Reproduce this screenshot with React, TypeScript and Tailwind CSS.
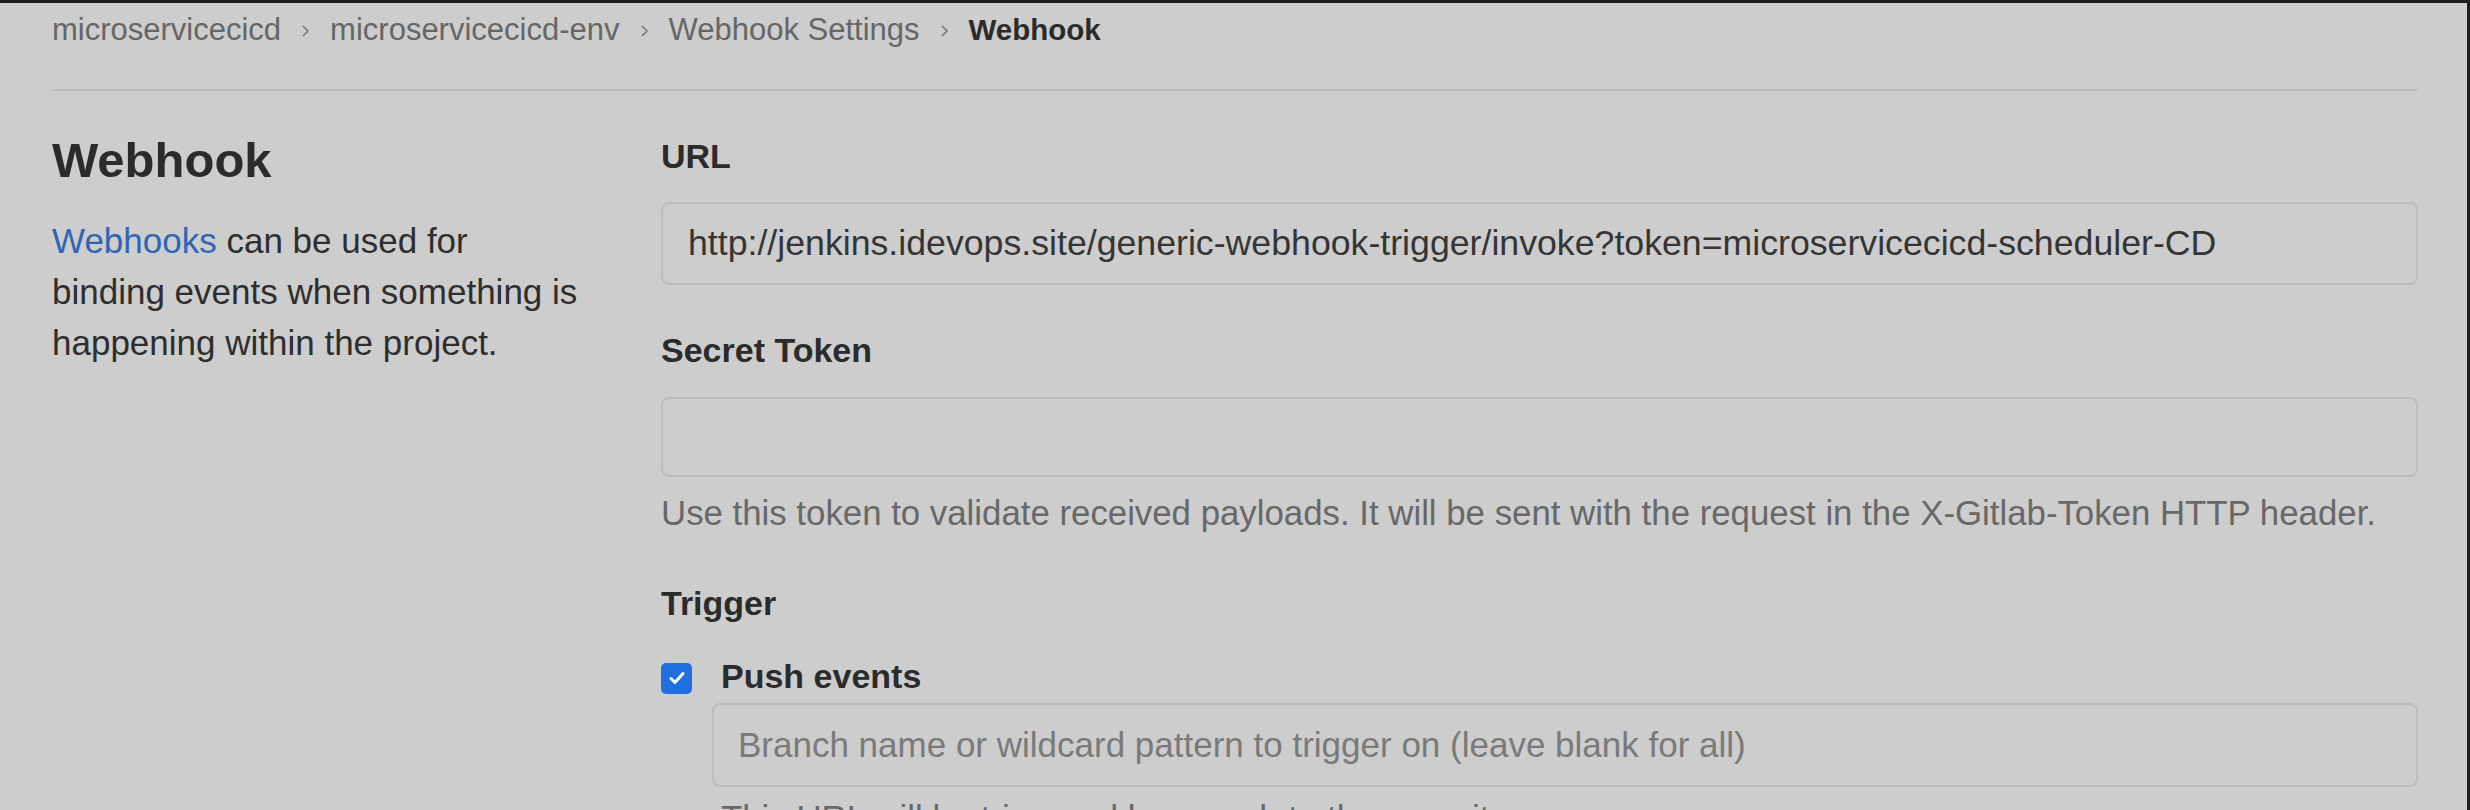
import React from "react";

const crumbs = ["microservicecicd", "microservicecicd-env", "Webhook Settings"];

const Chevron = () => (
  <svg width="9" height="14" viewBox="0 0 9 14" className="mx-5 shrink-0">
    <path d="M2 2l5 5-5 5" fill="none" stroke="#7a7a7a" strokeWidth="1.6" />
  </svg>
);

const Label = ({ children }: { children: React.ReactNode }) => (
  <div className="text-[34px] leading-[40px] font-bold text-[#2b2b2b]">{children}</div>
);

const App = () => {
  return (
    <div
      className="h-[810px] w-full overflow-hidden bg-[#cdcdcd] border-t-[3px] border-r-[3px] border-[#1e1e1e] pl-[52px] pr-[49px]"
      style={{ fontFamily: '"Liberation Sans", Arial, sans-serif' }}
    >
      {/* breadcrumb */}
      <div className="h-[88px] border-b-2 border-[#bcbcbc]">
        <div className="flex h-[55px] items-center text-[31px]">
          {crumbs.map((c) => (
            <React.Fragment key={c}>
              <span className="text-[#666666]">{c}</span>
              <Chevron />
            </React.Fragment>
          ))}
          <span className="text-[29.5px] font-bold text-[#2b2b2b]">Webhook</span>
        </div>
      </div>

      <div className="flex">
        {/* left column */}
        <div className="w-[609px] shrink-0 pt-[39px]">
          <h4 className="text-[49px] leading-[60px] font-bold text-[#2b2b2b]">Webhook</h4>
          <p className="mt-[25px] w-[530px] text-[35px] leading-[51px] text-[#2e2e2e]">
            <span className="text-[#2f65b5]">Webhooks</span> can be used for binding events when
            something is happening within the project.
          </p>
        </div>

        {/* right column */}
        <div className="flex-1 pt-[45px]">
          <Label>URL</Label>
          <div className="mt-[26px] flex h-[83px] items-center rounded-[8px] border-2 border-[#bdbdbd] px-[25px] text-[35.7px] text-[#353535]">
            http://jenkins.idevops.site/generic-webhook-trigger/invoke?token=microservicecicd-scheduler-CD
          </div>

          <div className="mt-[45px]">
            <Label>Secret Token</Label>
          </div>
          <div className="mt-[27px] h-[80px] rounded-[8px] border-2 border-[#bdbdbd]" />
          <div className="mt-[16px] text-[34.8px] leading-[40px] text-[#686868]">
            Use this token to validate received payloads. It will be sent with the request in the
            X-Gitlab-Token HTTP header.
          </div>

          <div className="mt-[50px]">
            <Label>Trigger</Label>
          </div>
          <div className="mt-[33px] flex h-[40px] items-center">
            <div className="mt-[4px] flex h-[31px] w-[31px] items-center justify-center rounded-[5px] bg-[#1f6fe0]">
              <svg width="20" height="20" viewBox="0 0 20 20">
                <path d="M4 10.5l4 4 8-9" fill="none" stroke="#ffffff" strokeWidth="3" strokeLinecap="round" strokeLinejoin="round" />
              </svg>
            </div>
            <span className="ml-[29px] text-[34px] font-bold text-[#2b2b2b]">Push events</span>
          </div>
          <div className="ml-[51px] mt-[7px] flex h-[84px] items-center rounded-[8px] border-2 border-[#bdbdbd] px-[24px] text-[35px] text-[#7a7a7a]">
            Branch name or wildcard pattern to trigger on (leave blank for all)
          </div>
          <div className="ml-[60px] mt-[11px] text-[34.8px] leading-[40px] text-[#686868]">
            This URL will be triggered by a push to the repository
          </div>
        </div>
      </div>
    </div>
  );
};

export default App;
